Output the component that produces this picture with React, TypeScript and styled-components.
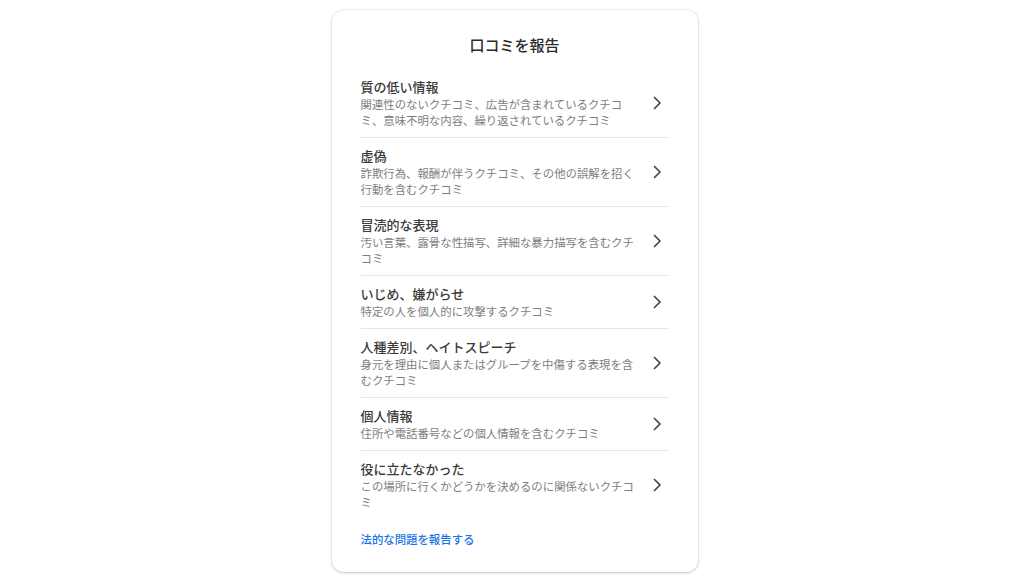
import React from 'react';
import styled, { createGlobalStyle } from 'styled-components';

const GlobalStyle = createGlobalStyle`
  html, body {
    margin: 0;
    padding: 0;
    background: #ffffff;
  }
  body {
    font-family: 'Noto Sans CJK JP', 'Noto Sans', sans-serif;
    color: #202124;
  }
`;

const Page = styled.div`
  display: flex;
  justify-content: center;
  padding: 10px 0 0 5px;
  min-height: 576px;
  box-sizing: border-box;
`;

const Card = styled.div`
  width: 366px;
  height: 562px;
  box-sizing: border-box;
  background: #ffffff;
  border-radius: 12px;
  box-shadow: 0 1px 3px rgba(60, 64, 67, 0.25), 0 0 0 1px rgba(60, 64, 67, 0.06);
  padding: 25px 29px 25px;
  display: flex;
  flex-direction: column;
`;

const Heading = styled.h1`
  margin: 0 0 14px;
  font-size: 15px;
  line-height: 20px;
  font-weight: 500;
  text-align: center;
  color: #2b2b2b;
`;

const List = styled.div`
  display: flex;
  flex-direction: column;
`;

const Row = styled.div<{ last?: boolean }>`
  display: flex;
  align-items: center;
  justify-content: space-between;
  padding: 9px 0;
  border-bottom: ${props => (props.last ? 'none' : '1px solid #e6e6e6')};
  cursor: pointer;
`;

const RowText = styled.div`
  width: 280px;
  display: flex;
  flex-direction: column;
`;

const RowTitle = styled.div`
  font-size: 13px;
  line-height: 18px;
  font-weight: 500;
  color: #3a3a3a;
`;

const RowDesc = styled.div`
  font-size: 11.4px;
  line-height: 16px;
  color: #7e7e7e;
`;

const Chevron = styled.svg`
  width: 16px;
  height: 16px;
  margin-right: 4px;
  flex-shrink: 0;
`;

const LegalLink = styled.a`
  margin-top: 12px;
  font-size: 11.4px;
  line-height: 16px;
  font-weight: 500;
  color: #1a73e8;
  text-decoration: none;
`;

const reasons = [
  {
    title: '質の低い情報',
    desc: '関連性のないクチコミ、広告が含まれているクチコミ、意味不明な内容、繰り返されているクチコミ',
  },
  {
    title: '虚偽',
    desc: '詐欺行為、報酬が伴うクチコミ、その他の誤解を招く行動を含むクチコミ',
  },
  {
    title: '冒涜的な表現',
    desc: '汚い言葉、露骨な性描写、詳細な暴力描写を含むクチコミ',
  },
  {
    title: 'いじめ、嫌がらせ',
    desc: '特定の人を個人的に攻撃するクチコミ',
  },
  {
    title: '人種差別、ヘイトスピーチ',
    desc: '身元を理由に個人またはグループを中傷する表現を含むクチコミ',
  },
  {
    title: '個人情報',
    desc: '住所や電話番号などの個人情報を含むクチコミ',
  },
  {
    title: '役に立たなかった',
    desc: 'この場所に行くかどうかを決めるのに関係ないクチコミ',
  },
];

export default function App() {
  return (
    <>
      <GlobalStyle />
      <Page>
        <Card>
          <Heading>口コミを報告</Heading>
          <List>
            {reasons.map((r, i) => (
              <Row key={r.title} last={i === reasons.length - 1}>
                <RowText>
                  <RowTitle>{r.title}</RowTitle>
                  <RowDesc>{r.desc}</RowDesc>
                </RowText>
                <Chevron viewBox="0 0 16 16">
                  <polyline
                    points="5.5,2.5 11,8 5.5,13.5"
                    fill="none"
                    stroke="#444444"
                    strokeWidth="1.7"
                    strokeLinecap="round"
                    strokeLinejoin="round"
                  />
                </Chevron>
              </Row>
            ))}
          </List>
          <LegalLink href="#">法的な問題を報告する</LegalLink>
        </Card>
      </Page>
    </>
  );
}
